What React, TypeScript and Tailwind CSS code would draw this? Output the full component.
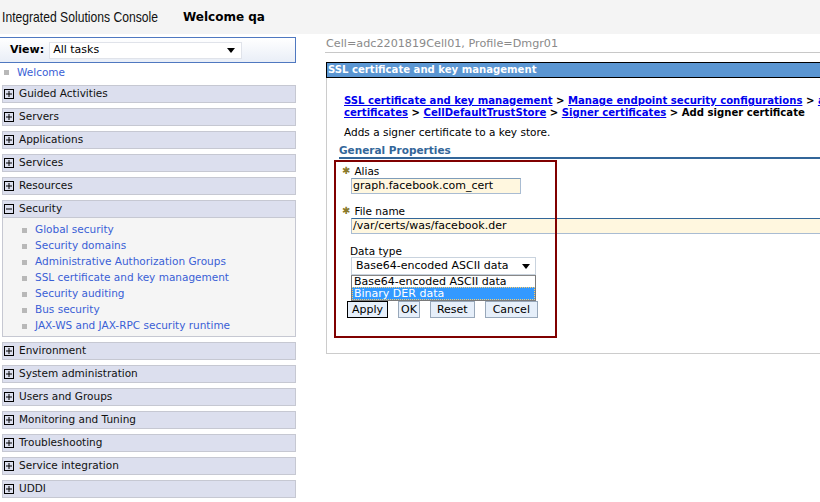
import React from "react";

const font = { fontFamily: '"DejaVu Sans", Verdana, sans-serif' };

const navTop = ["Guided Activities", "Servers", "Applications", "Services", "Resources"];
const navBottom = [
  "Environment",
  "System administration",
  "Users and Groups",
  "Monitoring and Tuning",
  "Troubleshooting",
  "Service integration",
  "UDDI",
];
const securityLinks = [
  "Global security",
  "Security domains",
  "Administrative Authorization Groups",
  "SSL certificate and key management",
  "Security auditing",
  "Bus security",
  "JAX-WS and JAX-RPC security runtime",
];

function ToggleBox({ open }: { open?: boolean }) {
  return (
    <svg width="10" height="10" viewBox="0 0 10 10" className="shrink-0">
      <rect x="0.5" y="0.5" width="9" height="9" fill="none" stroke="#000" />
      <line x1="2" y1="5" x2="8" y2="5" stroke="#000" />
      {!open && <line x1="5" y1="2" x2="5" y2="8" stroke="#000" />}
    </svg>
  );
}

function NavItem({ label }: { label: string }) {
  return (
    <div className="h-[18px] bg-[#dcdfee] border border-[#c6c8d2] flex items-center gap-[5px] pl-[1px] text-[10.5px] text-[#111]">
      <ToggleBox />
      <span>{label}</span>
    </div>
  );
}

function Bullet() {
  return <span className="w-[5px] h-[5px] bg-[#b8b8b8] shrink-0" />;
}

export default function App() {
  return (
    <div className="w-[820px] h-[502px] bg-white overflow-hidden text-[10.5px]" style={font}>
      {/* header */}
      <div className="h-[34px] bg-[#f4f4f4] flex items-center">
        <div className="w-[183px] shrink-0 whitespace-nowrap">
          <span
            className="inline-block ml-[2px] text-[15px] text-[#111] origin-left scale-x-[0.81]"
            style={{ fontFamily: '"Liberation Sans", Arial, sans-serif' }}
          >
            Integrated Solutions Console
          </span>
        </div>
        <span className="font-bold text-[12px]">Welcome qa</span>
      </div>

      <div className="flex mt-[3px]">
        {/* left nav */}
        <div className="w-[296px] shrink-0">
          <div className="h-[26px] border border-l-0 border-[#4f78c0] bg-gradient-to-b from-white to-[#e9eef7] flex items-center pl-[10px] gap-[5px]">
            <span className="font-bold text-[11px]">View:</span>
            <div className="w-[193px] h-[17px] bg-white border border-[#e0e3ea] flex items-center justify-between pl-[3px] pr-[6px] text-[11px]">
              <span>All tasks</span>
              <svg width="8" height="5" viewBox="0 0 8 5">
                <path d="M0 0 H8 L4 5 Z" fill="#000" />
              </svg>
            </div>
          </div>
          <div className="h-[22px] pb-[3px] flex items-center gap-[8px] pl-[4px]">
            <Bullet />
            <span className="text-[#3a5fd6]">Welcome</span>
          </div>
          <div className="flex flex-col gap-[5px] pl-[2px]">
            {navTop.map((n) => (
              <NavItem key={n} label={n} />
            ))}
            <div className="border border-[#c6c8d2]">
              <div className="h-[17px] bg-[#dcdfee] border-b border-[#c6c8d2] flex items-center gap-[5px] pl-[1px] text-[#111]">
                <ToggleBox open />
                <span>Security</span>
              </div>
              <div className="bg-[#f5f5f5] pt-[4px] pb-[2px] flex flex-col">
                {securityLinks.map((s) => (
                  <div key={s} className="h-[16px] flex items-center gap-[8px] pl-[19px]">
                    <Bullet />
                    <span className="text-[#3a5fd6]">{s}</span>
                  </div>
                ))}
              </div>
            </div>
            {navBottom.map((n) => (
              <NavItem key={n} label={n} />
            ))}
          </div>
        </div>

        {/* divider */}
        <div className="ml-[16px] w-px h-[470px] bg-[#dcdcdc]" />

        {/* content */}
        <div className="flex-1 pl-[13px]">
          <div className="h-[16px] border-b border-[#c8c8c8] text-[11.2px] text-[#8a8a8a] leading-[14px] pl-[1px]">
            Cell=adc2201819Cell01, Profile=Dmgr01
          </div>
          <div className="relative mt-[9px] ml-[1px] border-l border-b border-[#cccccc] h-[292px]">
            <div className="h-[16px] bg-[#5b96d2] border border-black border-r-0 -ml-px text-white font-bold text-[10.1px] leading-[14px] pl-[1px]">
              SSL certificate and key management
            </div>
            <div className="pl-[17px] pt-[17px]">
              <div className="font-bold text-[10.1px] leading-[12px] whitespace-nowrap">
                <a className="text-[#0000ee] underline">SSL certificate and key management</a> &gt;{" "}
                <a className="text-[#0000ee] underline">Manage endpoint security configurations</a> &gt;{" "}
                <a className="text-[#0000ee] underline">a</a>
                <br />
                <a className="text-[#0000ee] underline">certificates</a> &gt;{" "}
                <a className="text-[#0000ee] underline">CellDefaultTrustStore</a> &gt;{" "}
                <a className="text-[#0000ee] underline">Signer certificates</a> &gt; Add signer certificate
              </div>
              <div className="mt-[7px] leading-[12px]">Adds a signer certificate to a key store.</div>
            </div>
            <div className="ml-[12px] mt-[6px] border-b-[2px] border-[#336699] font-bold text-[#336699] leading-[13px]">
              General Properties
            </div>

            <div className="pl-[15px] pt-[6px]">
              <div className="flex items-center gap-[4px] leading-[12px]">
                <span className="text-[#8a7a2a] text-[10px]">✱</span>
                <span>Alias</span>
              </div>
              <div className="ml-[9px] mt-[1px] w-[170px] h-[16px] bg-[#fff7df] border border-[#a9bcd2] border-t-[#7f9db9] pl-[1px] text-[11px] leading-[14px]">
                graph.facebook.com_cert
              </div>

              <div className="flex items-center gap-[4px] mt-[11px] leading-[12px]">
                <span className="text-[#8a7a2a] text-[10px]">✱</span>
                <span>File name</span>
              </div>
              <div className="ml-[9px] mt-[1px] h-[16px] bg-[#fff7df] border border-[#a9bcd2] border-t-[#336699] border-r-0 pl-[1px] text-[11px] leading-[14px]">
                /var/certs/was/facebook.der
              </div>

              <div className="ml-[8px] mt-[11px] leading-[12px]">Data type</div>
              <div className="ml-[9px] w-[185px] h-[18px] bg-white border border-[#c9d3de] flex items-center justify-between pl-[4px] pr-[5px] text-[11px]">
                <span>Base64-encoded ASCII data</span>
                <svg width="8" height="5" viewBox="0 0 8 5">
                  <path d="M0 0 H8 L4 5 Z" fill="#000" />
                </svg>
              </div>
              <div className="ml-[9px] w-[185px] border border-[#7a7a7a] border-t-[#888] text-[11px] leading-[11px]">
                <div className="pl-[2px] bg-white">Base64-encoded ASCII data</div>
                <div className="pl-[1px] bg-[#3399ff] text-white border border-dotted border-[#ffcc66]">Binary DER data</div>
              </div>
              <div className="flex gap-[10px] ml-[5px] text-[11px]">
                <button className="h-[17px] px-[4px] bg-[#e6effa] border border-black leading-[14px]">Apply</button>
                <button className="h-[17px] px-[2px] bg-[#e6effa] border border-[#98a8ba] leading-[14px]">OK</button>
                <button className="h-[17px] px-[6px] bg-[#e6effa] border border-[#98a8ba] leading-[14px]">Reset</button>
                <button className="h-[17px] px-[7px] bg-[#e6effa] border border-[#98a8ba] leading-[14px]">Cancel</button>
              </div>
            </div>

            {/* annotation box */}
            <div className="absolute left-[7px] top-[98px] w-[223px] h-[178px] border-[2px] border-[#800000] pointer-events-none" />
          </div>
        </div>
      </div>
    </div>
  );
}
